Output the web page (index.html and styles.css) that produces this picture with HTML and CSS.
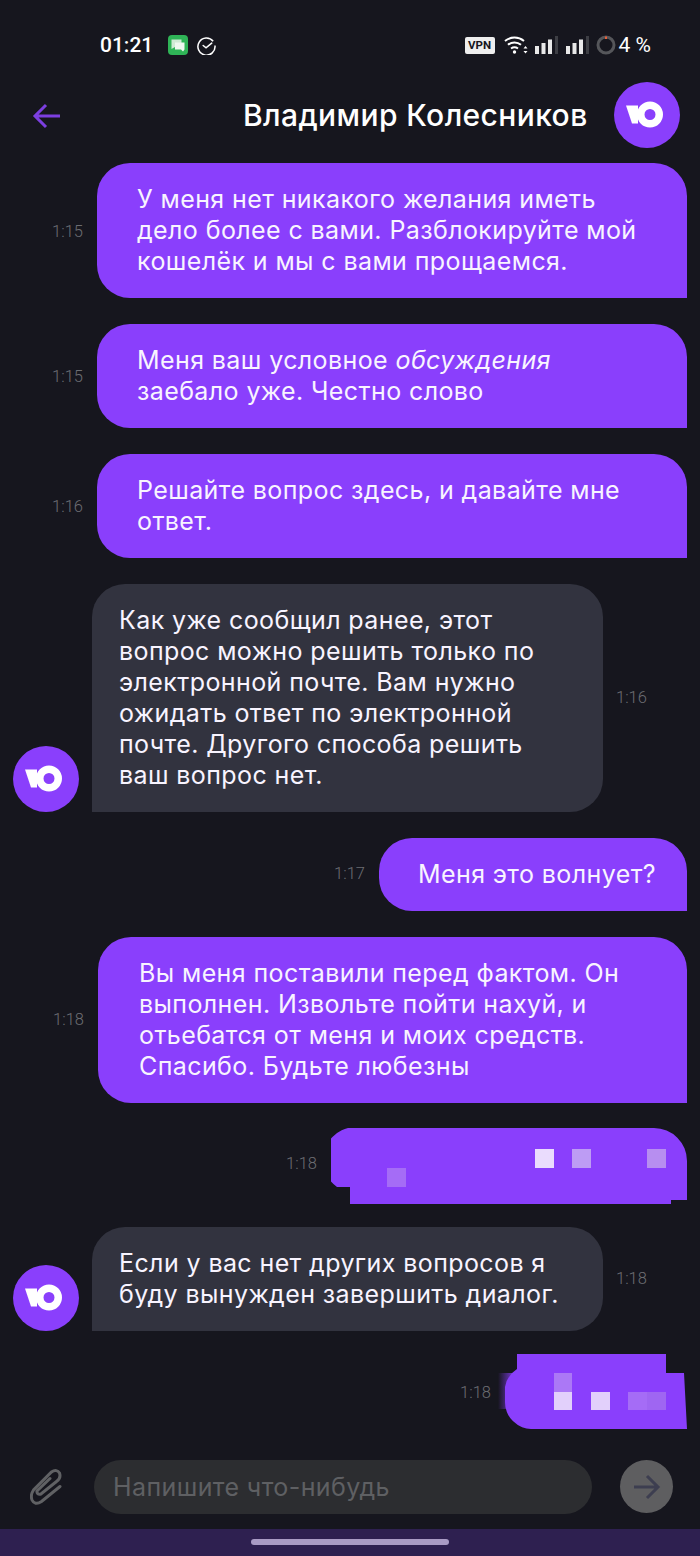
FILE: index.html
```html
<!DOCTYPE html>
<html lang="ru">
<head>
<meta charset="utf-8">
<title>Чат</title>
<link rel="stylesheet" href="styles.css">
</head>
<body>
<svg class="defs" width="0" height="0">
  <symbol id="logo" viewBox="0 0 66 66">
    <circle cx="33" cy="33" r="33" fill="#8a3ffc"/>
    <path d="M12 23.500h12v18h-6z" fill="#fff"/>
    <path fill-rule="evenodd" d="M36 19.500a13 13 0 1 1 0 26a13 13 0 1 1 0-26zM36 27a5.500 5.500 0 1 0 0 11a5.500 5.500 0 1 0 0-11z" fill="#fff"/>
  </symbol>
</svg>
<div class="app">
  <div class="status">
    <div class="status-left">
      <span class="clock">01:21</span>
      <svg class="ic-msg" width="20" height="20" viewBox="0 0 20 20">
        <rect width="20" height="20" rx="4" fill="#2fb457"/>
        <path d="M3.500 4.500h10v7.500H7l-3.500 2z" fill="#cfead5"/>
        <path d="M7 7.500h9.500v7l-1.500 2-2-2H7z" fill="#eef8f0"/>
      </svg>
      <svg class="ic-check" width="19" height="19" viewBox="0 0 20 20" fill="none" stroke="#fff" stroke-width="1.600">
        <path d="M17 5.500A9 9 0 1 0 18.900 10"/>
        <path d="M6.500 10l3 2.500 6-5" stroke-linecap="round"/>
      </svg>
    </div>
    <div class="status-right">
      <span class="vpn">VPN</span>
      <svg width="24" height="20" viewBox="0 0 24 20" fill="none" stroke="#fff" stroke-width="2">
        <path d="M1 6a15 15 0 0 1 19 0M4 9.800a10 10 0 0 1 13 0M7 13.500a6 6 0 0 1 7 0"/>
        <circle cx="10.500" cy="17" r="1.700" fill="#fff" stroke="none"/>
        <path d="M19.500 13.500h4l-2-2.500zM19.500 16h4l-2 2.500z" fill="#fff" stroke="none"/>
      </svg>
      <svg class="bars" width="23" height="18" viewBox="0 0 23 18">
        <rect x="0" y="10" width="4" height="8" fill="#e8e8e8"/>
        <rect x="6.500" y="7" width="4" height="11" fill="#e8e8e8"/>
        <rect x="13" y="3.500" width="4" height="14.500" fill="#e8e8e8"/>
        <rect x="20" y="0" width="3" height="18" fill="#3d3e44"/>
      </svg>
      <svg class="bars bars-2" width="23" height="18" viewBox="0 0 23 18">
        <rect x="0" y="10" width="4" height="8" fill="#e8e8e8"/>
        <rect x="6.500" y="7" width="4" height="11" fill="#e8e8e8"/>
        <rect x="13" y="3.500" width="4" height="14.500" fill="#e8e8e8"/>
        <rect x="20" y="0" width="3" height="18" fill="#3d3e44"/>
      </svg>
      <svg class="batt" width="20" height="20" viewBox="0 0 20 20" fill="none" stroke-width="3">
        <circle cx="10" cy="10" r="8" stroke="#55565a"/>
        <path d="M10 1.500v2.500" stroke="#e8603a" stroke-width="2"/>
      </svg>
      <span class="pct">4 %</span>
    </div>
  </div>
  <header class="topbar">
    <svg class="back" width="30" height="28" viewBox="0 0 30 28" fill="none" stroke="#7c3fe0" stroke-width="3">
      <path d="M28 14H4M14 3L3 14l11 11"/>
    </svg>
    <h1 class="title">Владимир Колесников</h1>
    <svg class="avatar" width="66" height="66"><use href="#logo"/></svg>
  </header>
  <main class="chat">
    <div class="row">
      <time class="stamp stamp-low2">1:15</time>
      <div class="bubble out wide">У меня нет никакого желания иметь<br>дело более с вами. Разблокируйте мой<br>кошелёк и мы с вами прощаемся.</div>
    </div>
    <div class="row">
      <time class="stamp stamp-low">1:15</time>
      <div class="bubble out wide">Меня ваш условное <em>обсуждения</em><br>заебало уже. Честно слово</div>
    </div>
    <div class="row">
      <time class="stamp stamp-low">1:16</time>
      <div class="bubble out wide">Решайте вопрос здесь, и давайте мне<br>ответ.</div>
    </div>
    <div class="row in">
      <svg class="avatar avatar-low" width="66" height="66"><use href="#logo"/></svg>
      <div class="bubble inc">Как уже сообщил ранее, этот<br>вопрос можно решить только по<br>электронной почте. Вам нужно<br>ожидать ответ по электронной<br>почте. Другого способа решить<br>ваш вопрос нет.</div>
      <time class="stamp">1:16</time>
    </div>
    <div class="row">
      <time class="stamp">1:17</time>
      <div class="bubble out short">Меня это волнует?</div>
    </div>
    <div class="row">
      <time class="stamp">1:18</time>
      <div class="bubble out wide wide-alt">Вы меня поставили перед фактом. Он<br>выполнен. Извольте пойти нахуй, и<br>отьебатся от меня и моих средств.<br>Спасибо. Будьте любезны</div>
    </div>
    <div class="row row-blur">
      <time class="stamp stamp-high">1:18</time>
      <svg class="blur-a" width="356" height="76" viewBox="0 0 356 76">
        <path d="M33 0H323a33 33 0 0 1 33 33V72H340V76H19V59H6A33 33 0 0 1 33 0z" fill="#8a3ffc"/>
        <rect x="204" y="21" width="19" height="19" fill="#eadcfd"/>
        <rect x="241" y="21" width="19" height="19" fill="#bd9cf4"/>
        <rect x="316" y="21" width="19" height="19" fill="#b78ef0"/>
        <rect x="56" y="40" width="19" height="19" fill="#a56cf6"/>
      </svg>
    </div>
    <div class="row in row-tight">
      <svg class="avatar avatar-low" width="66" height="66"><use href="#logo"/></svg>
      <div class="bubble inc">Если у вас нет других вопросов я<br>буду вынужден завершить диалог.</div>
      <time class="stamp">1:18</time>
    </div>
    <div class="row row-tight row-last">
      <time class="stamp stamp-low2">1:18</time>
      <svg class="blur-b" width="190" height="75" viewBox="0 0 190 75">
        <defs>
          <linearGradient id="fade" x1="0" x2="1" y1="0" y2="0">
            <stop offset="0" stop-color="#8a3ffc" stop-opacity="0"/>
            <stop offset="1" stop-color="#8a3ffc"/>
          </linearGradient>
        </defs>
        <rect x="1" y="19" width="19" height="36" fill="url(#fade)"/>
        <path d="M20 0H169V19H187L190 75H36A27 27 0 0 1 8 47V33A27 27 0 0 1 20 15z" fill="#8a3ffc"/>
        <rect x="57" y="19" width="18" height="19" fill="#ab78f6"/>
        <rect x="57" y="38" width="18" height="18" fill="#e2d0fb"/>
        <rect x="94" y="38" width="19" height="18" fill="#e2d0fb"/>
        <rect x="131" y="38" width="19" height="18" fill="#a56cf6"/>
        <rect x="150" y="38" width="19" height="18" fill="#9f66f2"/>
      </svg>
    </div>
  </main>
  <div class="composer">
    <svg class="clip" width="32" height="36" viewBox="0 0 32 36" fill="none" stroke="#606164" stroke-width="3" stroke-linecap="round">
      <path d="M30 17.500L11.500 32.500C7 35.500 3.500 34.500 2 31C.5 27 1.500 24 3.500 21L21.500 3C25 .5 28 1.500 29.500 4C30.500 7 29.500 10.500 26.500 12.500L11 25C8.500 26 6.500 24.500 7 22L20 9.500"/>
    </svg>
    <div class="field">Напишите что-нибудь</div>
    <div class="send">
      <svg width="28" height="26" viewBox="0 0 28 26" fill="none" stroke="#3d3e50" stroke-width="3">
        <path d="M1 13h24M14 2l11 11-11 11"/>
      </svg>
    </div>
  </div>
  <div class="navbar"><span class="pill"></span></div>
</div>
</body>
</html>
```

FILE: styles.css
```css
* { box-sizing: border-box; }
html, body { margin: 0; padding: 0; background: #16161e; }
.defs { position: absolute; }
.app {
  width: 700px;
  height: 1556px;
  display: flex;
  flex-direction: column;
  overflow: hidden;
  background: #16161e;
  color: #fff;
  font-family: "Inter", "Liberation Sans", sans-serif;
}
.status {
  height: 82px;
  flex: none;
  padding: 35px 49px 0 100px;
  display: flex;
  justify-content: space-between;
  align-items: flex-start;
}
.status-left, .status-right { display: flex; align-items: center; height: 20px; }
.clock {
  font: 500 21px/20px "Roboto", sans-serif;
  margin-right: 15px;
}
.ic-check { margin-left: 9px; }
.vpn {
  font: 700 11.500px/17px "Roboto", sans-serif;
  background: #eee;
  color: #16161e;
  border-radius: 2px;
  width: 30px;
  height: 17px;
  text-align: center;
  margin-right: 9px;
}
.bars { margin-left: 7px; }
.bars-2 { margin-left: 8px; }
.batt { margin-left: 7px; margin-right: 3px; }
.pct { font: 400 21px/20px "Roboto", sans-serif; white-space: nowrap; }
.topbar {
  height: 81px;
  flex: none;
  display: flex;
  align-items: flex-start;
  padding-left: 32px;
}
.back { margin-top: 20px; flex: none; }
.title {
  margin: 15px 0 0 181px;
  font-size: 30px;
  font-weight: 500;
  letter-spacing: .4px;
  line-height: 36px;
  white-space: nowrap;
  flex: none;
  width: 371px;
}
.avatar { flex: none; display: block; }
.chat { flex: 1; min-height: 0; display: flex; flex-direction: column; gap: 26.500px; }
.row {
  display: flex;
  justify-content: flex-end;
  align-items: center;
  gap: 14px;
  padding-right: 13px;
}
.row.in { justify-content: flex-start; padding: 0 0 0 13px; gap: 13px; }
.row-blur { margin-top: -1px; }
.row-tight { margin-top: -3.500px; }
.row-last { gap: 6px; }
.avatar-low { align-self: flex-end; }
.stamp {
  font: 300 16.500px/20px "Roboto", sans-serif;
  color: #6c6d72;
}
.stamp-low { margin-top: 2px; }
.stamp-low2 { margin-top: 4px; }
.stamp-high { margin-bottom: 4px; }
.bubble {
  font-size: 25px;
  letter-spacing: .4px;
  line-height: 31px;
  color: #f8f4ff;
  padding: 21px 20px 20.500px 40px;
}
.bubble em { font-style: italic; }
.out { background: #8a3ffc; border-radius: 33px 33px 0 33px; }
.wide { width: 590px; }
.wide-alt { width: 589px; padding-left: 41px; }
.short { width: 308px; padding-left: 39px; }
.inc {
  background: #32333f;
  border-radius: 33px 33px 33px 0;
  width: 511px;
  padding-left: 27px;
}
.composer {
  height: 100px;
  flex: none;
  display: flex;
  align-items: flex-start;
  padding-left: 30px;
}
.clip { margin-top: 40px; flex: none; }
.field {
  margin: 31px 0 0 32px;
  width: 498px;
  height: 54px;
  border-radius: 27px;
  background: #2c2d30;
  color: #5f6063;
  font-size: 25px;
  letter-spacing: .4px;
  line-height: 54px;
  padding-left: 19px;
}
.send {
  margin: 31px 0 0 28px;
  width: 53px;
  height: 53px;
  border-radius: 50%;
  background: #5e5e60;
  display: flex;
  align-items: center;
  justify-content: center;
}
.navbar {
  height: 27px;
  flex: none;
  background: #2e2050;
  display: flex;
  justify-content: center;
  padding-top: 10px;
}
.pill { width: 198px; height: 6px; border-radius: 3px; background: #a99bc4; }
.blur-a, .blur-b { display: block; flex: none; }
```
